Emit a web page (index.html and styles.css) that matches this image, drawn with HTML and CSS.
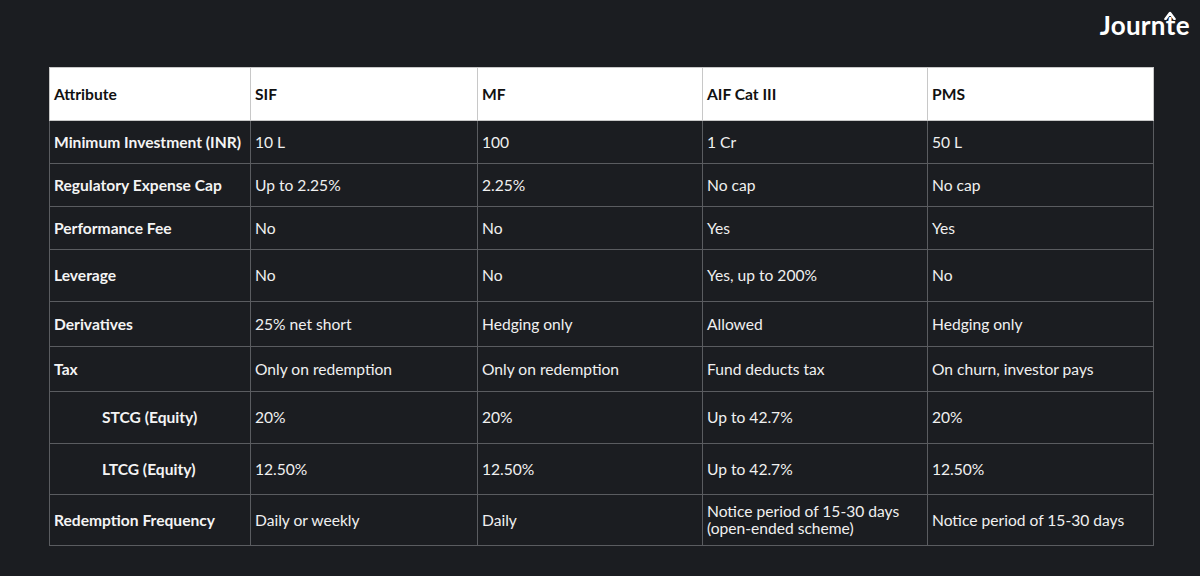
FILE: index.html
```html
<!DOCTYPE html>
<html>
<head>
<meta charset="utf-8">
<link rel="stylesheet" href="styles.css">
</head>
<body>
<div class="page">
  <header class="top">
    <div class="logo">Journ<span class="t">t<svg class="arrow" width="12" height="9" viewBox="0 0 12 9"><path d="M1.5 8 L6 2 L10.5 8" fill="none" stroke="#fff" stroke-width="2.6" stroke-linecap="round" stroke-linejoin="round"/></svg></span>e</div>
  </header>
  <table class="cmp">
    <colgroup>
      <col class="c1"><col class="c2"><col class="c3"><col class="c4"><col class="c5">
    </colgroup>
    <thead>
      <tr class="h53"><th>Attribute</th><th>SIF</th><th>MF</th><th>AIF Cat III</th><th>PMS</th></tr>
    </thead>
    <tbody>
      <tr class="h43"><th>Minimum Investment (INR)</th><td>10 L</td><td>100</td><td>1 Cr</td><td>50 L</td></tr>
      <tr class="h43"><th>Regulatory Expense Cap</th><td>Up to 2.25%</td><td>2.25%</td><td>No cap</td><td>No cap</td></tr>
      <tr class="h43"><th>Performance Fee</th><td>No</td><td>No</td><td>Yes</td><td>Yes</td></tr>
      <tr class="h52"><th>Leverage</th><td>No</td><td>No</td><td>Yes, up to 200%</td><td>No</td></tr>
      <tr class="h45"><th>Derivatives</th><td>25% net short</td><td>Hedging only</td><td>Allowed</td><td>Hedging only</td></tr>
      <tr class="h45"><th>Tax</th><td>Only on redemption</td><td>Only on redemption</td><td>Fund deducts tax</td><td>On churn, investor pays</td></tr>
      <tr class="h52"><th class="sub">STCG (Equity)</th><td>20%</td><td>20%</td><td>Up to 42.7%</td><td>20%</td></tr>
      <tr class="h51"><th class="sub">LTCG (Equity)</th><td>12.50%</td><td>12.50%</td><td>Up to 42.7%</td><td>12.50%</td></tr>
      <tr class="h51"><th>Redemption Frequency</th><td>Daily or weekly</td><td>Daily</td><td>Notice period of 15-30 days<br>(open-ended scheme)</td><td>Notice period of 15-30 days</td></tr>
    </tbody>
  </table>
</div>
</body>
</html>
```
FILE: styles.css
```css
html, body {
  margin: 0;
  padding: 0;
  background: #1b1d21;
}
body {
  width: 1200px;
  height: 576px;
  overflow: hidden;
  font-family: Lato, "Open Sans", sans-serif;
  color: #f2f2f2;
}
.page {
  padding: 0 0 0 49px;
}
.top {
  height: 67px;
  display: flex;
  justify-content: flex-end;
  align-items: flex-start;
  padding-right: 10px;
}
.logo {
  margin-top: 10px;
  font-family: Lato, sans-serif;
  font-weight: 700;
  font-size: 26px;
  line-height: 30px;
  color: #ffffff;
  letter-spacing: 0.3px;
}
.logo .t {
  position: relative;
  display: inline-block;
}
.logo .arrow {
  position: absolute;
  left: -2px;
  top: 1px;
}
.cmp {
  width: 1105px;
  border-collapse: collapse;
  table-layout: fixed;
  font-size: 15.6px;
}
.c1 { width: 201px; }
.c2 { width: 227px; }
.c3 { width: 225px; }
.c4 { width: 225px; }
.c5 { width: 226px; }
.cmp th, .cmp td {
  border: 1px solid #5a5c60;
  padding: 0 4px;
  text-align: left;
  vertical-align: middle;
  line-height: 17px;
  white-space: nowrap;
}
.cmp thead th {
  background: #ffffff;
  color: #111111;
  font-weight: 700;
  border-color: #c8c8c8;
}
.cmp tbody th {
  font-weight: 700;
  color: #f4f4f4;
}
.cmp tbody td {
  font-weight: 400;
  color: #f0f0f0;
}
.cmp th.sub {
  padding-left: 52px;
}
.h53 { height: 53px; }
.h43 { height: 43px; }
.h45 { height: 45px; }
.h51 { height: 51px; }
.h52 { height: 52px; }
```
